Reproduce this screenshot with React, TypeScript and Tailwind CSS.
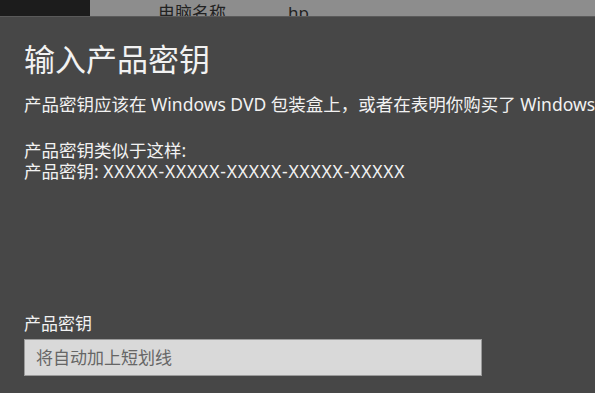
import React from "react";

const font = {
  fontFamily: '"Noto Sans", "Noto Sans CJK SC", sans-serif',
};

const App = () => {
  return (
    <div
      className="w-[595px] h-[393px] overflow-hidden flex flex-col bg-[#474747]"
      style={font}
    >
      <div className="h-[17px] flex shrink-0 overflow-hidden border-b border-[#5a5a5a]">
        <div className="w-[90px] bg-[#1c1c1c]" />
        <div className="flex-1 bg-[#8d8d8d] flex text-[17px] leading-[26px] text-[#222] pl-[68px]">
          <span className="w-[130px]">电脑名称</span>
          <span>hp</span>
        </div>
      </div>
      <div className="flex-1 flex flex-col pl-[24px] pt-[21px] text-[#f2f2f2]">
        <h1 className="text-[31px] leading-[42px] whitespace-nowrap">输入产品密钥</h1>
        <p className="mt-[13px] text-[17.5px] leading-[22px] whitespace-nowrap">
          产品密钥应该在 Windows DVD 包装盒上，或者在表明你购买了 Windows
        </p>
        <div className="mt-[25px] text-[17.5px] leading-[21px]">
          <p>产品密钥类似于这样:</p>
          <p>
            产品密钥: <span className="tracking-[0.8px]">XXXXX-XXXXX-XXXXX-XXXXX-XXXXX</span>
          </p>
        </div>
        <label className="mt-[131px] text-[17px] leading-[22px]">产品密钥</label>
        <input
          className="mt-[4px] w-[458px] h-[37px] bg-[#d9d9d9] border border-[#9a9a9a] px-[11px] text-[17px] text-[#333] placeholder:text-[#666] outline-none"
          placeholder="将自动加上短划线"
          style={font}
        />
      </div>
    </div>
  );
};

export default App;
